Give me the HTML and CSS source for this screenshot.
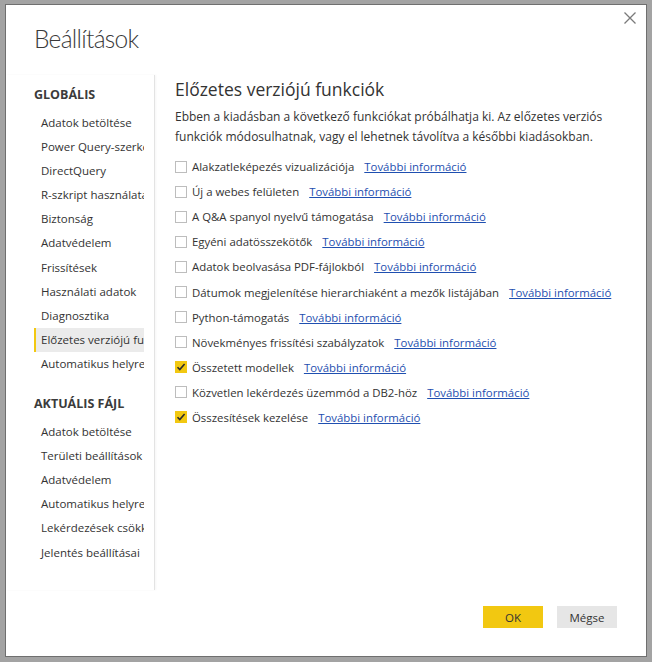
FILE: index.html
```html
<!DOCTYPE html>
<html lang="hu">
<head>
<meta charset="utf-8">
<title>Beállítások</title>
<link rel="stylesheet" href="styles.css">
</head>
<body>
<div class="frame">
  <div class="dialog">
    <button class="close" aria-label="Bezárás">
      <svg width="12" height="12" viewBox="0 0 12 12"><path d="M0.5 0.5 L11.5 11.5 M11.5 0.5 L0.5 11.5" stroke="#7a7a7a" stroke-width="1.3" fill="none"/></svg>
    </button>
    <h1 class="title">Beállítások</h1>
    <div class="main">
      <nav class="sidebar">
        <div class="group-title">GLOBÁLIS</div>
        <ul class="nav-list">
          <li>Adatok betöltése</li>
          <li>Power Query-szerkesztő</li>
          <li>DirectQuery</li>
          <li>R-szkript használata</li>
          <li>Biztonság</li>
          <li>Adatvédelem</li>
          <li>Frissítések</li>
          <li>Használati adatok</li>
          <li>Diagnosztika</li>
          <li class="active">Előzetes verziójú funkciók</li>
          <li>Automatikus helyreállítás</li>
        </ul>
        <div class="group-title second">AKTUÁLIS FÁJL</div>
        <ul class="nav-list">
          <li>Adatok betöltése</li>
          <li>Területi beállítások</li>
          <li>Adatvédelem</li>
          <li>Automatikus helyreállítás</li>
          <li>Lekérdezések csökkentése</li>
          <li>Jelentés beállításai</li>
        </ul>
      </nav>
      <section class="content">
        <h2 class="content-title">Előzetes verziójú funkciók</h2>
        <p class="desc">Ebben a kiadásban a következő funkciókat próbálhatja ki. Az előzetes verziós funkciók módosulhatnak, vagy el lehetnek távolítva a későbbi kiadásokban.</p>
        <ul class="features">
          <li><span class="cb"></span><span class="label">Alakzatleképezés vizualizációja</span><a href="#">További információ</a></li>
          <li><span class="cb"></span><span class="label">Új a webes felületen</span><a href="#">További információ</a></li>
          <li><span class="cb"></span><span class="label">A Q&amp;A spanyol nyelvű támogatása</span><a href="#">További információ</a></li>
          <li><span class="cb"></span><span class="label">Egyéni adatösszekötők</span><a href="#">További információ</a></li>
          <li><span class="cb"></span><span class="label">Adatok beolvasása PDF-fájlokból</span><a href="#">További információ</a></li>
          <li><span class="cb"></span><span class="label">Dátumok megjelenítése hierarchiaként a mezők listájában</span><a href="#">További információ</a></li>
          <li><span class="cb"></span><span class="label">Python-támogatás</span><a href="#">További információ</a></li>
          <li><span class="cb"></span><span class="label">Növekményes frissítési szabályzatok</span><a href="#">További információ</a></li>
          <li><span class="cb checked"><svg width="12" height="12" viewBox="0 0 12 12"><path d="M2.5 6.2 L4.8 8.6 L9.6 3" stroke="#2b2b2b" stroke-width="1.6" fill="none"/></svg></span><span class="label">Összetett modellek</span><a href="#">További információ</a></li>
          <li><span class="cb"></span><span class="label">Közvetlen lekérdezés üzemmód a DB2-höz</span><a href="#">További információ</a></li>
          <li><span class="cb checked"><svg width="12" height="12" viewBox="0 0 12 12"><path d="M2.5 6.2 L4.8 8.6 L9.6 3" stroke="#2b2b2b" stroke-width="1.6" fill="none"/></svg></span><span class="label">Összesítések kezelése</span><a href="#">További információ</a></li>
        </ul>
      </section>
    </div>
    <div class="footer">
      <button class="btn primary">OK</button>
      <button class="btn">Mégse</button>
    </div>
  </div>
</div>
</body>
</html>
```
FILE: styles.css
```css
* { box-sizing: border-box; }
html, body { margin: 0; padding: 0; }
body {
  background: #a3a3a3;
  font-family: "Segoe UI", "Open Sans", "Noto Sans", sans-serif;
  color: #333333;
}
.frame {
  width: 652px;
  height: 662px;
  padding: 4px 5px 5px 5px;
}
.dialog {
  position: relative;
  height: 100%;
  background: #ffffff;
  border: 1px solid #6f6f6f;
  display: flex;
  flex-direction: column;
}
.close {
  position: absolute;
  top: 7px;
  right: 10px;
  width: 12px;
  height: 12px;
  padding: 0;
  border: 0;
  background: none;
  display: flex;
}
.title {
  margin: 0;
  height: 70px;
  padding: 17px 0 0 28px;
  font-family: "Lato", "Open Sans", sans-serif;
  font-size: 24.5px;
  letter-spacing: -0.7px;
  font-weight: 300;
  line-height: 34px;
  color: #3a3a3a;
}
.main {
  display: flex;
  height: 515px;
}
.sidebar {
  width: 149px;
  padding-left: 28px;
  padding-right: 10px;
  border-right: 1px solid #e3e3e3;
  box-shadow: 1px 0 2px rgba(0,0,0,0.04);
  overflow: hidden;
}
.group-title {
  margin-top: 10px;
  height: 20px;
  line-height: 20px;
  font-size: 12.5px;
  font-weight: 700;
  color: #3b3b3b;
  white-space: nowrap;
}
.group-title.second { margin-top: 18px; }
.nav-list {
  list-style: none;
  margin: 6px 0 0 0;
  padding: 0;
}
.nav-list li {
  height: 24.1px;
  line-height: 24px;
  padding-left: 7px;
  font-size: 11.5px;
  color: #333333;
  white-space: nowrap;
  overflow: hidden;
}
.nav-list li.active {
  background: #ebebeb;
  border-left: 2px solid #f2c811;
  padding-left: 5px;
}
.content {
  padding-left: 20px;
  padding-top: 2px;
  flex: 1;
}
.content-title {
  margin: 0;
  font-size: 17.5px;
  font-weight: 400;
  line-height: 24px;
  color: #333333;
}
.desc {
  margin: 6px 0 0 0;
  font-size: 12px;
  line-height: 20px;
  width: 440px;
}
.features {
  list-style: none;
  margin: 7px 0 0 0;
  padding: 0;
}
.features li {
  height: 25.1px;
  display: flex;
  align-items: center;
  font-size: 11.4px;
  white-space: nowrap;
}
.cb {
  width: 12px;
  height: 12px;
  border: 1px solid #bdbdbd;
  background: #fff;
  margin-right: 5px;
  flex: none;
  display: flex;
}
.cb.checked {
  background: #f2c811;
  border-color: #f2c811;
}
.cb svg { margin: -1px; }
.label { margin-right: 10px; }
.features a {
  color: #1f4fb0;
  text-decoration: underline;
}
.footer {
  flex: 1;
  display: flex;
  justify-content: flex-end;
  align-items: flex-start;
  gap: 14px;
  padding-top: 16px;
  padding-right: 29px;
}
.btn {
  width: 60px;
  height: 22px;
  border: 0;
  padding: 0;
  font-family: inherit;
  font-size: 11.5px;
  color: #333;
  background: #e6e6e6;
}
.btn.primary { background: #f2c811; }
```
